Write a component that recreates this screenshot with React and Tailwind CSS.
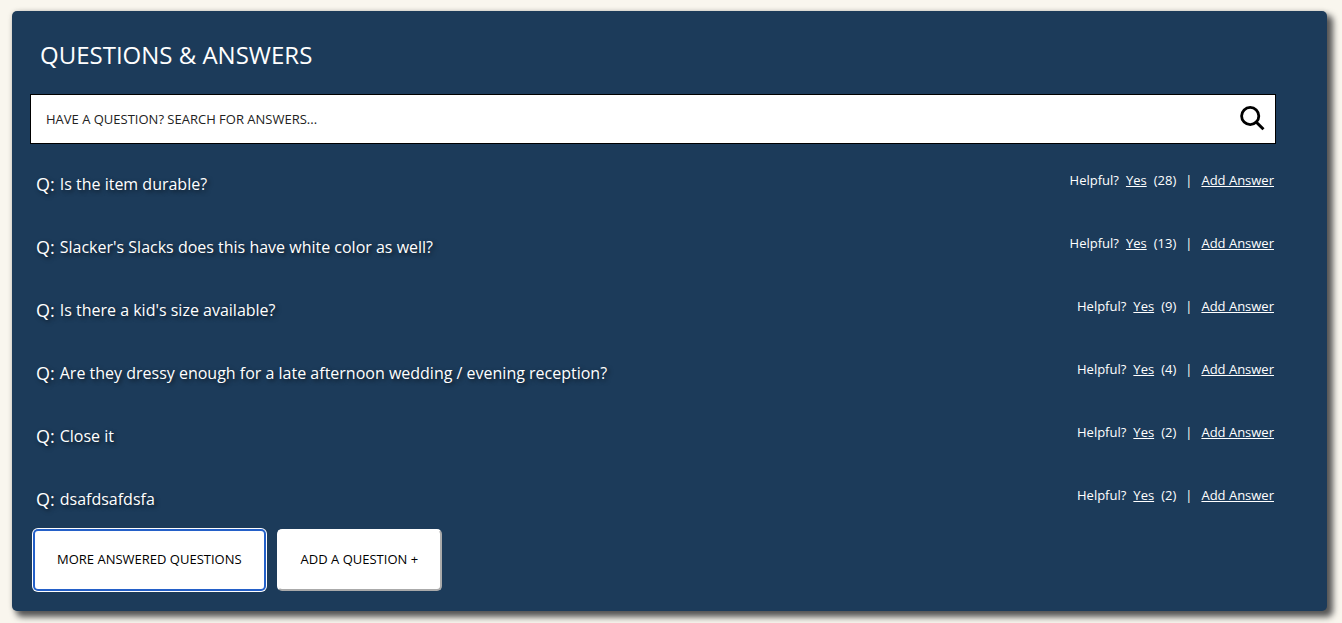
import React from 'react';

const questions = [
  { body: 'Is the item durable?', helpful: 28 },
  { body: "Slacker's Slacks does this have white color as well?", helpful: 13 },
  { body: "Is there a kid's size available?", helpful: 9 },
  { body: 'Are they dressy enough for a late afternoon wedding / evening reception?', helpful: 4 },
  { body: 'Close it', helpful: 2 },
  { body: 'dsafdsafdsfa', helpful: 2 },
];

function SearchIcon() {
  return (
    <svg viewBox="0 0 26 26" className="size-[26px]" fill="none" stroke="black" aria-hidden="true">
      <circle cx="11.2" cy="11" r="8.6" strokeWidth="2.8" />
      <path d="M17.4 17.2 L23.4 23.2" strokeWidth="3" strokeLinecap="square" />
    </svg>
  );
}

function SearchBar() {
  return (
    <form role="search" className="flex h-[50px] items-center border border-black bg-white pr-2.5 pl-[15px]">
      <input
        type="search"
        aria-label="Search questions"
        placeholder="HAVE A QUESTION? SEARCH FOR ANSWERS..."
        className="min-w-0 flex-1 bg-transparent text-[13px] leading-5 text-black outline-none placeholder:text-[#222222]"
      />
      <button type="button" aria-label="Search" className="mb-0.5">
        <SearchIcon />
      </button>
    </form>
  );
}

function Question({ body, helpful }) {
  return (
    <li className="flex h-[63px] items-start justify-between">
      <h3 className="flex items-start gap-[5px] text-base leading-7 [text-shadow:2px_2px_4px_rgba(0,0,0,0.6)]">
        <span className="text-lg leading-7">Q:</span>
        <span>{body}</span>
      </h3>
      <div className="flex gap-[7px] text-[13px] leading-5">
        <span>Helpful?</span>
        <button type="button" className="underline">Yes</button>
        <span>({helpful})</span>
        <span className="px-0.5">|</span>
        <button type="button" className="underline">Add Answer</button>
      </div>
    </li>
  );
}

export default function App() {
  return (
    <div className="bg-[#f9f6ee] px-3 pt-[11px] pb-3 font-['Open_Sans',sans-serif] text-white">
      <section className="mr-[3px] rounded-[5px] bg-[#1c3b5a] pt-6 pr-[51px] pb-5 pl-[18px] shadow-[5px_5px_6px_1px_#555555,0_0_5px_rgba(0,0,0,0.15)]">
        <h2 className="pl-2.5 text-2xl leading-10">QUESTIONS &amp; ANSWERS</h2>
        <div className="mt-[19px]">
          <SearchBar />
        </div>
        <ul className="mt-[26px] pr-0.5 pl-1.5">
          {questions.map((q) => (
            <Question key={q.body} body={q.body} helpful={q.helpful} />
          ))}
        </ul>
        <div className="-mt-[19px] flex gap-[11px] pl-[3px] text-[13px] text-black">
          <button
            type="button"
            className="h-[62px] rounded-[5px] bg-white px-6 shadow-[0_0_0_1px_white,inset_0_0_0_2px_#2460c8]"
          >
            MORE ANSWERED QUESTIONS
          </button>
          <button
            type="button"
            className="h-[62px] rounded-[5px] border-2 border-t-white border-r-[#aaaaaa] border-b-[#aaaaaa] border-l-white bg-white px-[22px]"
          >
            ADD A QUESTION +
          </button>
        </div>
      </section>
    </div>
  );
}
